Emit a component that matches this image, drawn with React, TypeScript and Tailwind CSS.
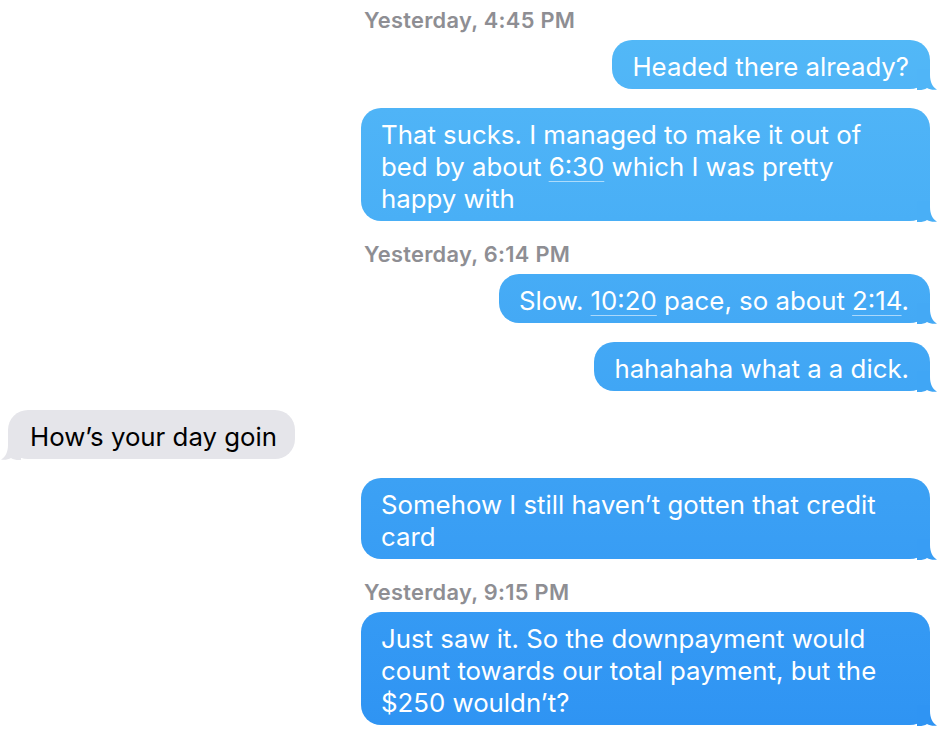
import React from "react";

const font = { fontFamily: 'Inter, "Liberation Sans", sans-serif' };

function Tail({ color, left }: { color: string; left?: boolean }) {
  return (
    <svg
      width="20"
      height="21"
      viewBox="0 0 20 21"
      className={
        left
          ? "absolute left-[-7px] bottom-[-1px] -scale-x-100"
          : "absolute right-[-7px] bottom-[-1px]"
      }
    >
      <path
        d="M0 0 H13 V6 C13 13 15.5 18 20 20.6 C16.5 21.2 12.5 20.6 10 19 C8 20.5 5 21 2 21 H0 Z"
        fill={color}
      />
    </svg>
  );
}

function Sent({
  from,
  to,
  children,
  wide,
}: {
  from: string;
  to: string;
  children: React.ReactNode;
  wide?: boolean;
}) {
  return (
    <div
      className={
        "relative self-end rounded-[20px] pl-[20px] pr-[21px] pt-[11px] pb-[6px] text-[25.8px] leading-[32px] text-white " +
        (wide ? "w-[569px]" : "w-fit")
      }
      style={{ background: `linear-gradient(to bottom, ${from}, ${to})` }}
    >
      <Tail color={to} />
      <div className="relative">{children}</div>
    </div>
  );
}

function Stamp({ children, first }: { children: React.ReactNode; first?: boolean }) {
  return (
    <div
      className={
        "ml-[356px] text-[21.8px] leading-[24px] font-semibold tracking-[0.3px] text-[#8e8e93] " +
        (first ? "" : "mt-[2px]")
      }
    >
      {children}
    </div>
  );
}

function U({ children }: { children: React.ReactNode }) {
  return (
    <span className="underline decoration-[rgba(255,255,255,0.55)] decoration-1 underline-offset-[5px]">
      {children}
    </span>
  );
}

export default function App() {
  return (
    <div className="min-h-[742px] w-[940px] bg-white" style={font}>
      <div className="flex flex-col gap-[19px] pt-[8px] pl-[8px] pr-[10px] pb-[16px]">
        <div className="flex flex-col gap-[8px]">
          <Stamp first>Yesterday, 4:45 PM</Stamp>
          <Sent from="#52b8f7" to="#50b5f7">
            Headed there already?
          </Sent>
        </div>
        <Sent from="#4fb4f7" to="#49aff6" wide>
          That sucks. I managed to make it out of
          <br />
          bed by about <U>6:30</U> which I was pretty
          <br />
          happy with
        </Sent>
        <div className="flex flex-col gap-[8px]">
          <Stamp>Yesterday, 6:14 PM</Stamp>
          <Sent from="#46acf6" to="#44a9f5">
            Slow. <U>10:20</U> pace, so about <U>2:14</U>.
          </Sent>
        </div>
        <Sent from="#43a8f5" to="#40a6f5">
          hahahaha what a a dick.
        </Sent>
        <div className="relative self-start w-fit rounded-[20px] bg-[#e5e5ea] pl-[22px] pr-[18px] pt-[11px] pb-[6px] text-[25.8px] leading-[32px] text-black">
          <Tail color="#e5e5ea" left />
          <div className="relative">How’s your day goin</div>
        </div>
        <Sent from="#3ca1f4" to="#389df4" wide>
          Somehow I still haven’t gotten that credit
          <br />
          card
        </Sent>
        <div className="flex flex-col gap-[8px]">
          <Stamp>Yesterday, 9:15 PM</Stamp>
          <Sent from="#359af4" to="#2f94f3" wide>
            Just saw it. So the downpayment would
            <br />
            count towards our total payment, but the
            <br />
            $250 wouldn’t?
          </Sent>
        </div>
      </div>
    </div>
  );
}
